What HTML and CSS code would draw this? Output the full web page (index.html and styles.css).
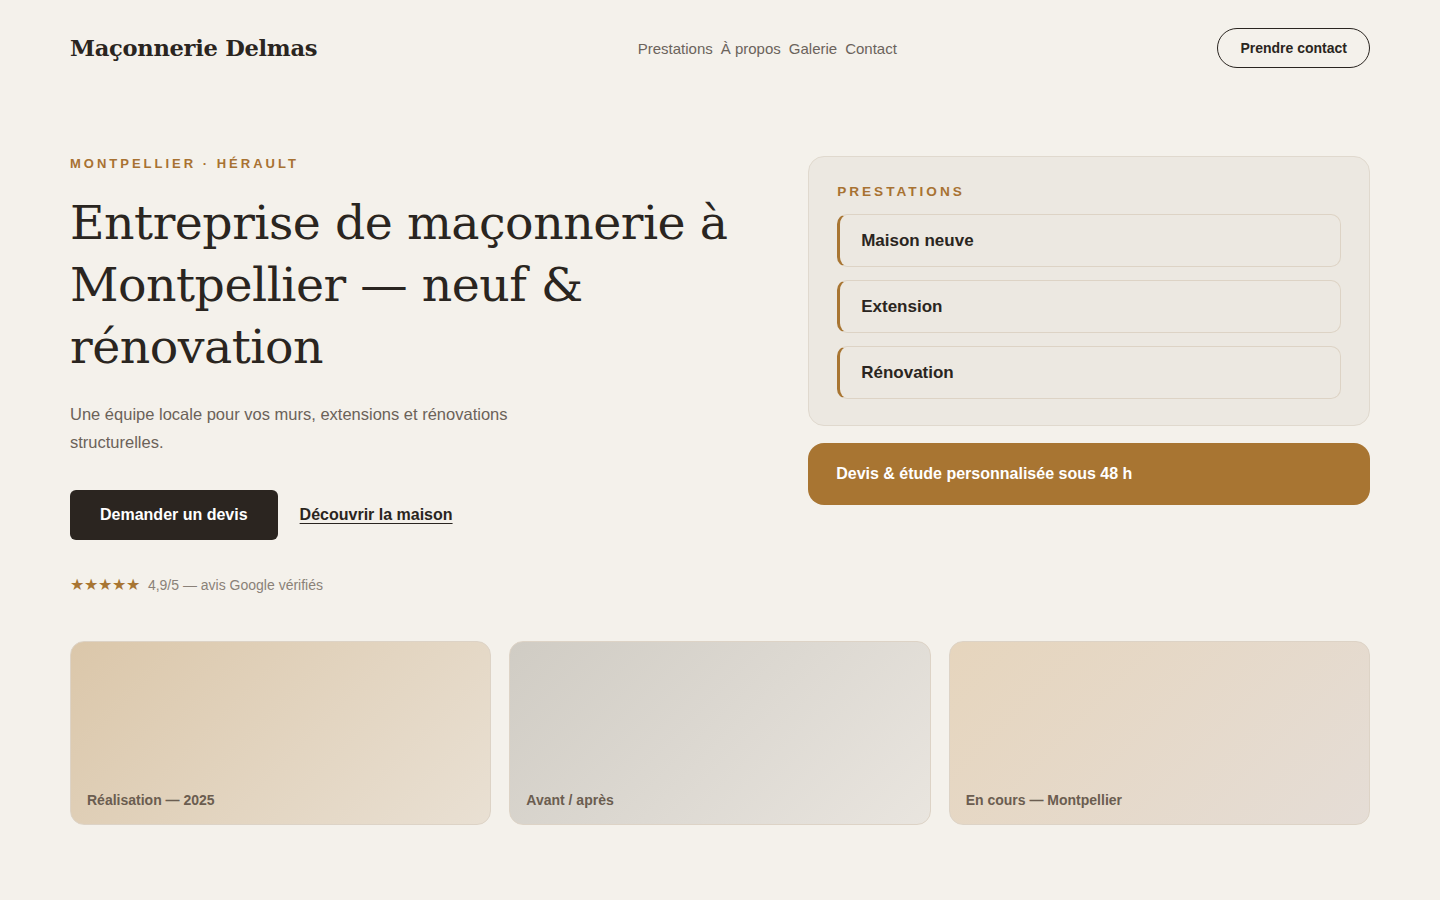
FILE: index.html
```html
<!DOCTYPE html>
<html lang="fr">
<head>
  <meta charset="UTF-8">
  <meta name="viewport" content="width=device-width, initial-scale=1.0">
  <title>Maçonnerie Delmas — Montpellier</title>
  <link rel="stylesheet" href="styles.css">
</head>
<body>
  <div class="page">
    <header class="header">
      <a class="logo" href="#">Maçonnerie Delmas</a>
      <nav class="nav">
        <a href="#">Prestations</a>
        <a href="#">À propos</a>
        <a href="#">Galerie</a>
        <a href="#">Contact</a>
      </nav>
      <a class="btn-outline" href="#">Prendre contact</a>
    </header>

    <section class="hero">
      <div class="hero-text">
        <p class="eyebrow">Montpellier · Hérault</p>
        <h1>Entreprise de maçonnerie à Montpellier — neuf &amp; rénovation</h1>
        <p class="lead">Une équipe locale pour vos murs, extensions et rénovations structurelles.</p>
        <div class="actions">
          <a class="btn-dark" href="#">Demander un devis</a>
          <a class="link" href="#">Découvrir la maison</a>
        </div>
        <p class="rating"><span class="stars">★★★★★</span> 4,9/5 — avis Google vérifiés</p>
      </div>

      <aside class="hero-side">
        <div class="services">
          <p class="services-title">Prestations</p>
          <ul>
            <li>Maison neuve</li>
            <li>Extension</li>
            <li>Rénovation</li>
          </ul>
        </div>
        <div class="banner">Devis &amp; étude personnalisée sous 48 h</div>
      </aside>
    </section>

    <section class="gallery">
      <div class="tile tile-1"><span>Réalisation — 2025</span></div>
      <div class="tile tile-2"><span>Avant / après</span></div>
      <div class="tile tile-3"><span>En cours — Montpellier</span></div>
    </section>
  </div>
</body>
</html>
```

FILE: styles.css
```css
* { box-sizing: border-box; }
body {
  margin: 0;
  background: #f4f1eb;
  color: #2a2520;
  font-family: "Liberation Sans", Arial, sans-serif;
}
a { color: inherit; text-decoration: none; }
.page { max-width: 1300px; margin: 0 auto; }

.header {
  display: flex;
  align-items: center;
  justify-content: space-between;
  padding: 28px 0;
}
.logo {
  font-family: "DejaVu Serif", Georgia, serif;
  font-weight: bold;
  font-size: 22.6px;
  letter-spacing: -0.3px;
}
.nav { display: flex; gap: 8px; font-size: 15px; color: #6b635b; }
.btn-outline {
  display: inline-flex;
  align-items: center;
  height: 40px;
  padding: 0 22px;
  border: 1px solid #2a2520;
  border-radius: 20px;
  font-size: 14px;
  font-weight: bold;
}

.hero {
  display: grid;
  grid-template-columns: 1.2fr 1fr;
  gap: 64px;
  padding-top: 60px;
}
.eyebrow {
  margin: 0;
  font-size: 13px;
  line-height: 16px;
  font-weight: bold;
  letter-spacing: 3px;
  text-transform: uppercase;
  color: #a87232;
}
h1 {
  margin: 20px 0 0;
  font-family: "DejaVu Serif", Georgia, serif;
  font-weight: normal;
  font-size: 47.4px;
  line-height: 62px;
  letter-spacing: -0.5px;
}
.lead {
  margin: 22px 0 0;
  max-width: 480px;
  font-size: 16.5px;
  line-height: 28px;
  color: #6b6259;
}
.actions { display: flex; align-items: center; gap: 22px; margin-top: 34px; }
.btn-dark {
  display: inline-flex;
  align-items: center;
  height: 50px;
  padding: 0 30px;
  border-radius: 6px;
  background: #2b2520;
  color: #fff;
  font-size: 16px;
  font-weight: bold;
}
.link { font-size: 16px; font-weight: bold; text-decoration: underline; text-underline-offset: 3px; }
.rating { margin: 36px 0 0; font-size: 14px; line-height: 18px; color: #8a8178; }
.stars { color: #a87532; font-size: 16px; margin-right: 4px; }

.services {
  padding: 27px 28px 26px;
  background: #ece8e1;
  border: 1px solid #e0d9ce;
  border-radius: 16px;
}
.services-title {
  margin: 0 0 14px;
  font-size: 13.6px;
  line-height: 16px;
  font-weight: bold;
  letter-spacing: 3px;
  text-transform: uppercase;
  color: #a87232;
}
.services ul { list-style: none; margin: 0; padding: 0; display: flex; flex-direction: column; gap: 13px; }
.services li {
  display: flex;
  align-items: center;
  height: 53px;
  padding-left: 21px;
  border: 1px solid #ddd3c5;
  border-left: 3px solid #a87532;
  border-radius: 10px;
  font-size: 17px;
  font-weight: bold;
}
.banner {
  display: flex;
  align-items: center;
  height: 62px;
  margin-top: 17px;
  padding: 0 28px;
  border-radius: 16px;
  background: #a87532;
  color: #fff;
  font-size: 16px;
  font-weight: bold;
}

.gallery {
  display: grid;
  grid-template-columns: repeat(3, 1fr);
  gap: 18px;
  margin-top: 47px;
}
.tile {
  display: flex;
  align-items: flex-end;
  height: 184px;
  padding: 0 16px 16px;
  border: 1px solid #ddd3c6;
  border-radius: 14px;
  font-size: 14px;
  font-weight: bold;
  color: #6b5d50;
}
.tile-1 { background: linear-gradient(135deg, #dbc7aa, #e9e0d3); }
.tile-2 { background: linear-gradient(135deg, #d0ccc4, #e9e5df); }
.tile-3 { background: linear-gradient(135deg, #e6d5bd, #e5ddd6); }
```
